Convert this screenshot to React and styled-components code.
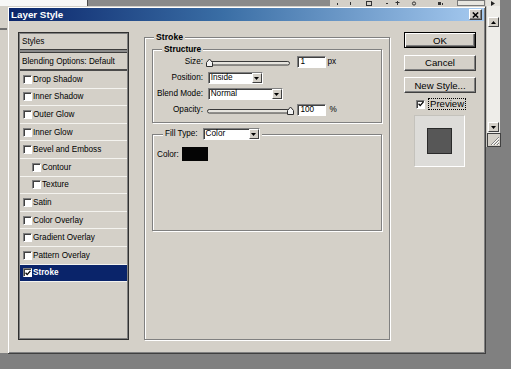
import React from "react";
import styled, { createGlobalStyle, css } from "styled-components";

const FACE = "#d4d0c8";
const FONT = `"Liberation Sans", Arial, sans-serif`;

const GlobalStyle = createGlobalStyle`
  html, body { margin: 0; padding: 0; background: #808080; }
  body { width: 511px; height: 369px; overflow: hidden; font-family: ${FONT}; color: #000; }
  * { box-sizing: border-box; }
`;

/* ---------- background application ---------- */
const Desktop = styled.div`
  position: relative;
  width: 511px;
  height: 369px;
  overflow: hidden;
  background: #808080;
  display: flex;
  flex-direction: column;
`;
const TopBar = styled.div`
  display: flex;
  height: 6px;
  flex: none;
`;
const CanvasEdge = styled.div`
  width: 88px;
  background: #f7f7f7;
  border-right: 1px solid #4a4a4a;
`;
const WorkArea = styled.div`
  width: 242px;
  background: #8a8a8a;
`;
const Toolbar = styled.div`
  width: 156px;
  background: ${FACE};
  display: flex;
`;
const ArrowTab = styled.div`
  width: 14px;
  background: #e4e2dc;
  display: flex;
  align-items: flex-end;
  justify-content: center;
`;
const Filler = styled.div`
  flex: 1;
  background: #808080;
`;
const MainRow = styled.div`
  flex: 1;
  display: flex;
  align-items: flex-start;
`;
const LeftDock = styled.div`
  width: 8px;
  height: 347px;
  display: flex;
  flex-direction: column;
  background: ${FACE};
`;
const DockHead = styled.div`
  height: 24px;
  border-bottom: 2px solid #6e6e6e;
`;
const DockBody = styled.div`
  flex: 1;
  border-right: 1px solid #9a9a9a;
`;
const Spacer = styled.div`
  width: 478px;
`;
const ScrollCol = styled.div`
  width: 14px;
  height: 141px;
  display: flex;
  flex-direction: column;
  align-items: center;
  background: #eeede9;
  border-left: 1px solid #c8c6c0;
  padding-top: 11px;
`;
const ScrollBtn = styled.div`
  width: 11px;
  height: 10px;
  background: ${FACE};
  border: 1px solid;
  border-color: #fff #404040 #404040 #fff;
  display: flex;
  align-items: center;
  justify-content: center;
`;
const ScrollTrack = styled.div`
  flex: 1;
`;
const Grip = styled.div`
  width: 14px;
  height: 14px;
  margin-top: 1px;
  background: ${FACE};
  border: 1px solid #404040;
  display: flex;
  align-items: center;
  justify-content: center;
`;

/* ---------- dialog window ---------- */
const Window = styled.div`
  position: absolute;
  left: 7px;
  top: 6px;
  width: 479px;
  height: 348px;
  background: ${FACE};
  border: 1px solid;
  border-color: ${FACE} #404040 #404040 ${FACE};
  box-shadow: inset 1px 1px 0 #fff, inset -1px -1px 0 #808080;
  padding: 1px;
  display: flex;
  flex-direction: column;
`;
const TitleBar = styled.div`
  height: 13px;
  flex: none;
  display: flex;
  align-items: center;
  justify-content: space-between;
  padding: 0 2px;
  background: linear-gradient(to right, #0a246a 0%, #3a6ea5 45%, #a6caf0 100%);
`;
const Title = styled.span`
  color: #fff;
  font-weight: bold;
  font-size: 9.8px;
  line-height: 13px;
`;
const CloseBtn = styled.span`
  width: 13px;
  height: 11px;
  background: ${FACE};
  border: 1px solid;
  border-color: #fff #404040 #404040 #fff;
  box-shadow: inset -1px -1px 0 #808080;
  display: flex;
  align-items: center;
  justify-content: center;
`;
const Body = styled.div`
  flex: 1;
  display: flex;
  align-items: flex-start;
  padding: 11px 7px 0 9px;
`;

/* ---------- style list ---------- */
const StyleList = styled.div`
  width: 111px;
  height: 308px;
  flex: none;
  border: 1px solid #303030;
  box-shadow: inset 1px 1px 0 #808080, inset -1px -1px 0 #808080;
  padding: 1px;
  display: flex;
  flex-direction: column;
  font-size: 8.2px;
`;
const HeadRow = styled.div`
  height: ${(p) => p.$h}px;
  display: flex;
  align-items: center;
  padding-left: 2px;
  white-space: nowrap;
`;
const HeavyRule = styled.div`
  height: 4px;
  background: #8a8a8a;
  border-top: 1px solid #3c3c3c;
  border-bottom: 1px solid #3c3c3c;
`;
const DarkRule = styled.div`
  height: 2px;
  background: #4a4a4a;
`;
const CheckRow = styled.div`
  height: 17.6px;
  display: flex;
  align-items: center;
  padding-left: ${(p) => (p.$indent ? 12 : 3)}px;
  border-bottom: 1px solid #f4f3ef;
  white-space: nowrap;
  ${(p) =>
    p.$selected &&
    css`
      background: #0a246a;
      color: #fff;
      font-weight: bold;
    `}
`;
const Check = styled.span`
  width: 9px;
  height: 9px;
  flex: none;
  background: #fff;
  border: 1px solid;
  border-color: #808080 #fff #fff #808080;
  box-shadow: inset 1px 1px 0 #404040;
  margin-right: ${(p) => p.$gap ?? 1}px;
  display: flex;
  align-items: center;
  justify-content: center;
`;

/* ---------- group boxes ---------- */
const Group = styled.fieldset`
  margin: 0;
  min-width: 0;
  border: 1px solid #808080;
  box-shadow: inset 1px 1px 0 #fff, 1px 1px 0 #fff;
`;
const StrokeGroup = styled(Group)`
  width: 246px;
  height: 308px;
  flex: none;
  margin-left: 15px;
  padding: 2px 6px 0 7px;
`;
const StructureGroup = styled(Group)`
  margin-right: 1px;
  padding: 2px 0 6px 2px;
`;
const FillGroup = styled(Group)`
  margin: 5px 1px 0 0;
  height: 103px;
  padding: 7px 0 0 4px;
`;
const Legend = styled.legend`
  margin-left: ${(p) => p.$ml}px;
  padding: 0 2px;
  background: ${FACE};
  font-weight: bold;
  font-size: ${(p) => p.$size}px;
  line-height: 10px;
  display: flex;
  align-items: center;
  gap: 5px;
`;
const LegendLabel = styled.span`
  font-weight: normal;
  font-size: 8.2px;
`;
const FieldGrid = styled.div`
  display: grid;
  grid-template-columns: 48px auto;
  grid-auto-rows: 12px;
  column-gap: 3px;
  row-gap: 4px;
  font-size: 8.2px;
`;
const Label = styled.span`
  text-align: right;
  line-height: 12px;
  white-space: nowrap;
`;
const Controls = styled.div`
  display: flex;
  align-items: center;
  gap: ${(p) => p.$gap ?? 3}px;
`;
const SliderSvg = styled.svg`
  display: block;
`;
const Sunken = css`
  height: 12px;
  background: #fff;
  border: 1px solid;
  border-color: #808080 #fff #fff #808080;
  box-shadow: inset 1px 1px 0 #404040;
`;
const NumBox = styled.div`
  ${Sunken}
  width: 29px;
  margin-left: ${(p) => p.$ml ?? 2.5}px;
  padding-left: ${(p) => p.$pl}px;
  font-size: 8.2px;
  line-height: 10px;
`;
const Unit = styled.span`
  margin-left: ${(p) => p.$ml}px;
  line-height: 12px;
`;
const Select = styled.div`
  ${Sunken}
  width: ${(p) => p.$w}px;
  margin-left: ${(p) => p.$ml ?? 0}px;
  padding-left: 2px;
  display: flex;
  align-items: center;
  font-size: 8.2px;
  font-weight: normal;
`;
const SelectText = styled.span`
  flex: 1;
  line-height: 10px;
`;
const SelectBtn = styled.span`
  width: 10px;
  height: 10px;
  background: ${FACE};
  border: 1px solid;
  border-color: #fff #404040 #404040 #fff;
  display: flex;
  align-items: center;
  justify-content: center;
`;
const ColorRow = styled.div`
  display: flex;
  align-items: center;
  gap: 3px;
  font-size: 8.2px;
`;
const Swatch = styled.div`
  width: 26px;
  height: 14px;
  background: #050505;
`;

/* ---------- buttons column ---------- */
const ButtonCol = styled.div`
  width: 72px;
  flex: none;
  margin-left: 14px;
  display: flex;
  flex-direction: column;
`;
const Button = styled.button`
  width: 72px;
  height: 16px;
  padding: 0;
  margin: ${(p) => (p.$first ? 0 : "6.5px")} 0 0 0;
  font-family: ${FONT};
  font-size: 9.6px;
  color: #000;
  background: ${FACE};
  border: 1px solid;
  border-color: #fff #404040 #404040 #fff;
  box-shadow: inset -1px -1px 0 #808080;
  ${(p) =>
    p.$default &&
    css`
      border: 1px solid #000;
      box-shadow: inset 1px 1px 0 #fff, inset -1px -1px 0 #404040,
        inset -2px -2px 0 #808080;
    `}
`;
const PreviewRow = styled.div`
  margin: 5px 0 0 12px;
  height: 12px;
  display: flex;
  align-items: center;
`;
const FocusLabel = styled.span`
  margin-left: 3px;
  padding: 0 1px;
  border: 1px dotted #000;
  font-size: 9.6px;
  line-height: 10px;
`;
const PreviewBox = styled.div`
  width: 51px;
  height: 52px;
  margin: 5px 0 0 10px;
  background: #dddcd9;
  border: 1px solid;
  border-color: #c4c2bc #fff #fff #c4c2bc;
  display: flex;
  align-items: center;
  justify-content: center;
`;
const PreviewSquare = styled.div`
  width: 25px;
  height: 26px;
  background: #575757;
  border: 1px solid #2a2a2a;
`;

/* ---------- small drawings ---------- */
const Tick = () => (
  <svg width="6" height="6" viewBox="0 0 6 6">
    <polyline points="0.6,2.8 2.2,4.6 5.4,0.8" fill="none" stroke="#000" strokeWidth="1.3" />
  </svg>
);
const DownArrow = () => (
  <svg width="5" height="3" viewBox="0 0 5 3">
    <polygon points="0,0 5,0 2.5,3" fill="#000" />
  </svg>
);
const UpArrow = () => (
  <svg width="5" height="3" viewBox="0 0 5 3">
    <polygon points="0,3 5,3 2.5,0" fill="#000" />
  </svg>
);
const CloseX = () => (
  <svg width="7" height="6" viewBox="0 0 7 6">
    <path d="M0.8 0.5 L6.2 5.5 M6.2 0.5 L0.8 5.5" stroke="#000" strokeWidth="1.5" />
  </svg>
);
const Slider = ({ thumb }) => (
  <SliderSvg width="88" height="9" viewBox="0 0 88 9">
    <rect x="1.5" y="3.5" width="82" height="3.5" rx="1.7" fill="#e6e4de" stroke="#3a3a3a" />
    <path
      d={`M${thumb + 0.5} 8.5 V4.5 L${thumb + 3.5} 1 L${thumb + 6.5} 4.5 V8.5 Z`}
      fill="#f2f2f2"
      stroke="#2e2e2e"
    />
  </SliderSvg>
);
const ToolMarks = () => (
  <svg width="156" height="6" viewBox="0 0 156 6">
    <rect x="7" y="3" width="1" height="2" fill="#333" />
    <rect x="20" y="2" width="1" height="3" fill="#333" />
    <rect x="36.5" y="1.5" width="5" height="4" fill="none" stroke="#333" />
    <rect x="56" y="3" width="2" height="1" fill="#333" />
    <rect x="67" y="1" width="1" height="4" fill="#333" />
    <rect x="65.5" y="2" width="4" height="1" fill="#333" />
    <circle cx="84" cy="3.5" r="1.6" fill="none" stroke="#333" />
    <rect x="108" y="2" width="3" height="3" fill="#333" />
    <rect x="112" y="3" width="1" height="2" fill="#333" />
    <rect x="127.5" y="0.5" width="27" height="5" fill="#e8e6e0" stroke="#7a7a7a" />
  </svg>
);
const GripLines = () => (
  <svg width="12" height="12" viewBox="0 0 12 12">
    <path d="M11 3 L3 11 M11 6 L6 11 M11 9 L9 11" stroke="#808080" strokeWidth="1" />
    <path d="M11 4 L4 11 M11 7 L7 11 M11 10 L10 11" stroke="#fff" strokeWidth="1" />
  </svg>
);

const effects = [
  { name: "Drop Shadow" },
  { name: "Inner Shadow" },
  { name: "Outer Glow" },
  { name: "Inner Glow" },
  { name: "Bevel and Emboss" },
  { name: "Contour", indent: true },
  { name: "Texture", indent: true },
  { name: "Satin" },
  { name: "Color Overlay" },
  { name: "Gradient Overlay" },
  { name: "Pattern Overlay" },
  { name: "Stroke", selected: true, checked: true },
];

export default function App() {
  return (
    <>
      <GlobalStyle />
      <Desktop>
        <TopBar>
          <CanvasEdge />
          <WorkArea />
          <Toolbar>
            <ToolMarks />
          </Toolbar>
          <ArrowTab>
            <svg width="4" height="5" viewBox="0 0 4 5">
              <polygon points="0,0 4,2.5 0,5" fill="#222" />
            </svg>
          </ArrowTab>
          <Filler />
        </TopBar>
        <MainRow>
          <LeftDock>
            <DockHead />
            <DockBody />
          </LeftDock>
          <Spacer />
          <ScrollCol>
            <ScrollBtn>
              <UpArrow />
            </ScrollBtn>
            <ScrollTrack />
            <ScrollBtn>
              <DownArrow />
            </ScrollBtn>
            <Grip>
              <GripLines />
            </Grip>
          </ScrollCol>
          <Filler />
        </MainRow>

        <Window>
          <TitleBar>
            <Title>Layer Style</Title>
            <CloseBtn>
              <CloseX />
            </CloseBtn>
          </TitleBar>
          <Body>
            <StyleList>
              <HeadRow $h={15}>Styles</HeadRow>
              <HeavyRule />
              <HeadRow $h={16}>Blending Options: Default</HeadRow>
              <DarkRule />
              {effects.map((e) => (
                <CheckRow key={e.name} $indent={e.indent} $selected={e.selected}>
                  <Check>{e.checked && <Tick />}</Check>
                  {e.name}
                </CheckRow>
              ))}
            </StyleList>

            <StrokeGroup>
              <Legend $ml={2} $size={8.7}>
                Stroke
              </Legend>
              <StructureGroup>
                <Legend $ml={7} $size={8.4}>
                  Structure
                </Legend>
                <FieldGrid>
                  <Label>Size:</Label>
                  <Controls $gap={0}>
                    <Slider thumb={0} />
                    <NumBox $pl={3}>1</NumBox>
                    <Unit $ml={2}>px</Unit>
                  </Controls>
                  <Label>Position:</Label>
                  <Controls>
                    <Select $w={55} $ml={1.7}>
                      <SelectText>Inside</SelectText>
                      <SelectBtn>
                        <DownArrow />
                      </SelectBtn>
                    </Select>
                  </Controls>
                  <Label>Blend Mode:</Label>
                  <Controls>
                    <Select $w={75} $ml={1.7}>
                      <SelectText>Normal</SelectText>
                      <SelectBtn>
                        <DownArrow />
                      </SelectBtn>
                    </Select>
                  </Controls>
                  <Label>Opacity:</Label>
                  <Controls $gap={0}>
                    <Slider thumb={81} />
                    <NumBox $pl={3}>100</NumBox>
                    <Unit $ml={4}>%</Unit>
                  </Controls>
                </FieldGrid>
              </StructureGroup>

              <FillGroup>
                <Legend $ml={6} $size={8.2}>
                  <LegendLabel>Fill Type:</LegendLabel>
                  <Select $w={57}>
                    <SelectText>Color</SelectText>
                    <SelectBtn>
                      <DownArrow />
                    </SelectBtn>
                  </Select>
                </Legend>
                <ColorRow>
                  <span>Color:</span>
                  <Swatch />
                </ColorRow>
              </FillGroup>
            </StrokeGroup>

            <ButtonCol>
              <Button $first $default>
                OK
              </Button>
              <Button>Cancel</Button>
              <Button>New Style...</Button>
              <PreviewRow>
                <Check $gap={0}>
                  <Tick />
                </Check>
                <FocusLabel>Preview</FocusLabel>
              </PreviewRow>
              <PreviewBox>
                <PreviewSquare />
              </PreviewBox>
            </ButtonCol>
          </Body>
        </Window>
      </Desktop>
    </>
  );
}
